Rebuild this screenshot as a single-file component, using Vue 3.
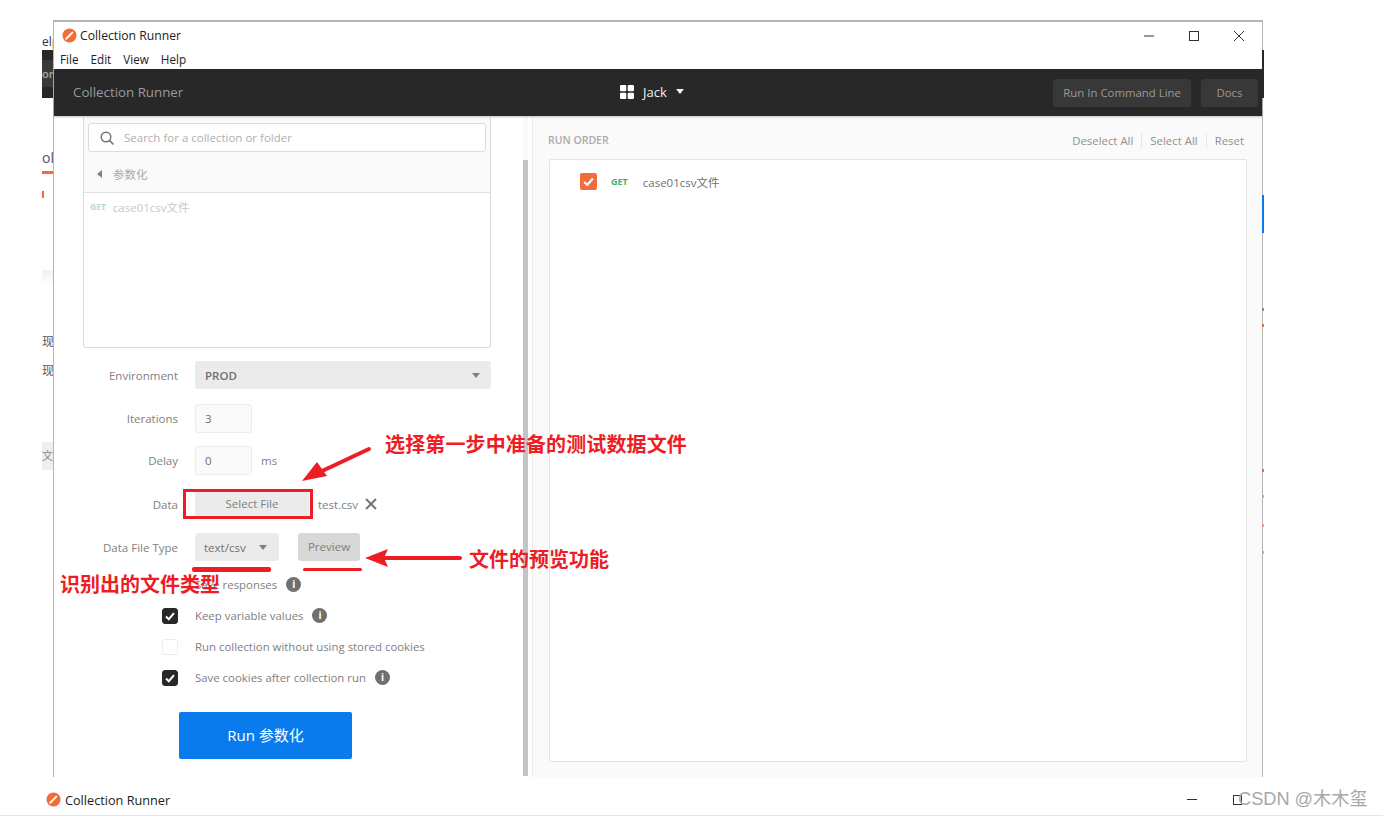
<script setup>
const options = [
  { label: "Save responses", checked: false, hidden: true, info: true },
  { label: "Keep variable values", checked: true, info: true },
  { label: "Run collection without using stored cookies", checked: false, info: false },
  { label: "Save cookies after collection run", checked: true, info: true },
];
// tiny specks of the main window on the right edge: [top, colour]
const specks = [
  [308, "#8a8a8a"],
  [324, "#e0734d"],
  [469, "#e0734d"],
  [495, "#e8a088"],
  [524, "#e8a088"],
  [551, "#e8a088"],
];
</script>

<template>
  <div class="desktop">
    <!-- bits of the main window sticking out behind the runner -->
    <div class="behind">
      <span class="bit elp">elp</span>
      <div class="bit dark"><span>or</span></div>
      <span class="bit tab">ol</span>
      <div class="bit tab-line"></div>
      <div class="bit tab-dot"></div>
      <div class="bit fade"></div>
      <span class="bit xian one">现</span>
      <span class="bit xian two">现</span>
      <span class="bit wen">文件</span>
    </div>
    <div class="behind-right">
      <div class="r-dark"></div>
      <div class="r-blue"></div>
      <div v-for="s in specks" :key="s[0]" class="speck" :style="{ top: s[0] - 50 + 'px', background: s[1] }"></div>
    </div>

    <div class="window">
      <div class="titlebar">
        <svg class="logo" viewBox="0 0 16 16">
          <circle cx="8" cy="8" r="7.5" fill="#f26b3a" />
          <path d="M4.5 11.5 L11 5" stroke="#fff" stroke-width="2" stroke-linecap="round" />
        </svg>
        <span class="title">Collection Runner</span>
        <div class="win-btns">
          <svg viewBox="0 0 12 12" width="12" height="12"><path d="M1 6h10" stroke="#333" stroke-width="1" /></svg>
          <svg viewBox="0 0 12 12" width="12" height="12"><rect x="1.5" y="1.5" width="9" height="9" fill="none" stroke="#333" stroke-width="1" /></svg>
          <svg viewBox="0 0 12 12" width="12" height="12"><path d="M1 1l10 10M11 1L1 11" stroke="#333" stroke-width="1" /></svg>
        </div>
      </div>
      <div class="menubar">
        <span>File</span><span>Edit</span><span>View</span><span>Help</span>
      </div>

      <header class="header">
        <span class="header-title">Collection Runner</span>
        <div class="workspace">
          <svg viewBox="0 0 14 14" width="14" height="14">
            <rect x="0" y="0" width="6.3" height="6.3" rx="1" fill="#fff" />
            <rect x="7.7" y="0" width="6.3" height="6.3" rx="1" fill="#fff" />
            <rect x="0" y="7.7" width="6.3" height="6.3" rx="1" fill="#fff" />
            <rect x="7.7" y="7.7" width="6.3" height="6.3" rx="1" fill="#fff" />
          </svg>
          <span>Jack</span>
          <i class="caret white"></i>
        </div>
        <div class="header-btns">
          <span class="hbtn">Run In Command Line</span>
          <span class="hbtn docs">Docs</span>
        </div>
      </header>

      <div class="body">
        <section class="left">
          <div class="tree">
            <div class="tree-top">
              <div class="search">
                <svg viewBox="0 0 14 14" width="14" height="14">
                  <circle cx="6" cy="6" r="4.8" fill="none" stroke="#707070" stroke-width="1.4" />
                  <path d="M9.5 9.5L13 13" stroke="#707070" stroke-width="1.6" stroke-linecap="round" />
                </svg>
                <span>Search for a collection or folder</span>
              </div>
              <div class="crumb"><i class="back"></i><span>参数化</span></div>
            </div>
            <div class="tree-row"><b>GET</b><span>case01csv文件</span></div>
          </div>

          <div class="row env">
            <label>Environment</label>
            <div class="select wide"><strong>PROD</strong><i class="caret"></i></div>
          </div>
          <div class="row iter">
            <label>Iterations</label>
            <div class="num">3</div>
          </div>
          <div class="row delay">
            <label>Delay</label>
            <div class="num">0</div>
            <span class="unit">ms</span>
          </div>
          <div class="row data">
            <label>Data</label>
            <div class="file-btn">Select File</div>
            <span class="file-name">test.csv</span>
            <svg class="file-x" viewBox="0 0 12 12" width="12" height="12"><path d="M1 1l10 10M11 1L1 11" stroke="#707070" stroke-width="1.8" /></svg>
          </div>
          <div class="row type">
            <label>Data File Type</label>
            <div class="select small"><span>text/csv</span><i class="caret"></i></div>
            <div class="preview">Preview</div>
          </div>

          <div class="options">
            <div v-for="o in options" :key="o.label" class="option">
              <span class="box" :class="{ on: o.checked, hide: o.hidden }">
                <svg v-if="o.checked" viewBox="0 0 12 12" width="12" height="12"><path d="M2 6.5l2.8 2.7L10 3.2" fill="none" stroke="#fff" stroke-width="2" /></svg>
              </span>
              <span class="opt-text">{{ o.label }}</span>
              <span v-if="o.info" class="info">i</span>
            </div>
          </div>

          <div class="run-wrap"><div class="run">Run 参数化</div></div>
        </section>

        <div class="track"><div class="thumb"></div></div>

        <section class="right">
          <div class="order-head">
            <span class="order-title">RUN ORDER</span>
            <div class="order-links">
              <span>Deselect All</span><span>Select All</span><span>Reset</span>
            </div>
          </div>
          <div class="order-box">
            <div class="order-row">
              <span class="orange">
                <svg viewBox="0 0 12 12" width="13" height="13"><path d="M2 6.5l2.8 2.7L10 3.2" fill="none" stroke="#fff" stroke-width="2" /></svg>
              </span>
              <b>GET</b>
              <span>case01csv文件</span>
            </div>
          </div>
        </section>
      </div>
    </div>

    <footer class="taskbar">
      <svg class="logo" viewBox="0 0 16 16">
        <circle cx="8" cy="8" r="7.5" fill="#f26b3a" />
        <path d="M4.5 11.5 L11 5" stroke="#fff" stroke-width="2" stroke-linecap="round" />
      </svg>
      <span class="title big">Collection Runner</span>
      <div class="task-min"></div>
      <div class="task-max"></div>
      <span class="mark">CSDN @木木玺</span>
    </footer>

    <!-- red notes drawn over the shot -->
    <div class="note-frame"></div>
    <div class="note-line l1"></div>
    <div class="note-line l2"></div>
    <svg class="arrows" viewBox="0 0 1383 818" width="1383" height="818">
      <path d="M369 449L320 472" stroke="#ee1c25" stroke-width="4" stroke-linecap="round" />
      <path d="M302 481L317 462L327 476Z" fill="#ee1c25" />
      <path d="M460 558H380" stroke="#ee1c25" stroke-width="4" stroke-linecap="round" />
      <path d="M365 558L388 549L384 558L388 567Z" fill="#ee1c25" />
    </svg>
    <span class="note n1">选择第一步中准备的测试数据文件</span>
    <span class="note n2">文件的预览功能</span>
    <span class="note n3">识别出的文件类型</span>
  </div>
</template>

<style scoped>
.desktop {
  position: relative;
  width: 1383px;
  height: 818px;
  overflow: hidden;
  background: #fff;
  font-family: "Open Sans", "Noto Sans CJK SC", sans-serif;
  font-size: 11.5px;
  color: #808080;
}

.behind {
  position: absolute;
  left: 42px;
  top: 30px;
  width: 12px;
  height: 747px;
  overflow: hidden;
  background: #fff;
}
.bit {
  position: absolute;
  white-space: nowrap;
}
.elp {
  left: 0;
  top: 3px;
  font-size: 12px;
  color: #333;
}
.dark {
  left: 0;
  top: 20px;
  width: 12px;
  height: 48px;
  background: #282828;
}
.dark span {
  position: absolute;
  left: 0;
  top: 10px;
  padding: 6px 0;
  width: 12px;
  background: #3a3a3a;
  color: #aaa;
  font-weight: 600;
  font-size: 11px;
}
.tab {
  left: 0;
  top: 118px;
  font-size: 14px;
  color: #555;
}
.tab-line {
  left: 0;
  top: 141px;
  width: 12px;
  height: 3px;
  background: #f26b3a;
}
.tab-dot {
  left: 0;
  top: 161px;
  width: 2px;
  height: 7px;
  background: #f26b3a;
}
.fade {
  left: 0;
  top: 240px;
  width: 12px;
  height: 14px;
  background: linear-gradient(#f0f0f0, #fff);
}
.xian {
  left: 0;
  font-size: 12px;
  color: #555;
}
.one { top: 302px; }
.two { top: 331px; }
.wen {
  left: 0;
  top: 412px;
  width: 12px;
  height: 28px;
  line-height: 28px;
  overflow: hidden;
  background: #eee;
  color: #888;
  font-size: 11px;
}

.behind-right {
  position: absolute;
  left: 1262px;
  top: 50px;
  width: 2px;
  z-index: 2;
}
.r-dark {
  height: 48px;
  background: #282828;
}
.r-blue {
  margin-top: 97px;
  height: 38px;
  background: #097bed;
}
.speck {
  position: absolute;
  left: 0;
  width: 2px;
  height: 3px;
}

.window {
  position: absolute;
  left: 53px;
  top: 20px;
  width: 1210px;
  height: 758px;
  box-sizing: border-box;
  border: 1px solid #b5b5b5;
  border-width: 2px 1px 1px 1px;
  background: #fff;
  display: flex;
  flex-direction: column;
}
.titlebar {
  height: 27px;
  display: flex;
  align-items: center;
  padding-left: 8px;
  flex: none;
}
.logo {
  width: 15px;
  height: 15px;
  flex: none;
}
.title {
  margin-left: 3px;
  font-size: 12.2px;
  color: #222;
}
.title.big {
  margin-left: 4px;
  font-size: 12.7px;
}
.win-btns {
  margin-left: auto;
  margin-right: 17px;
  display: flex;
  gap: 33px;
}
.menubar {
  height: 20px;
  display: flex;
  gap: 12px;
  align-items: center;
  padding-left: 6px;
  box-sizing: border-box;
  flex: none;
  font-size: 11.7px;
  color: #222;
}

.header {
  height: 47px;
  flex: none;
  background: #282828;
  display: flex;
  align-items: center;
  position: relative;
  padding-left: 19px;
  box-shadow: 0 1px 2px rgba(0, 0, 0, 0.25);
  z-index: 1;
}
.header-title {
  font-size: 13.3px;
  color: #9a9a9a;
  margin-top: -1px;
}
.workspace {
  position: absolute;
  left: 566px;
  top: -1px;
  height: 47px;
  display: flex;
  align-items: center;
  gap: 9px;
  color: #f0f0f0;
  font-size: 13px;
}
.header-btns {
  margin-left: auto;
  margin-right: 4px;
  display: flex;
  gap: 10px;
}
.hbtn {
  height: 28px;
  line-height: 28px;
  padding: 0 10px;
  background: #383838;
  border-radius: 3px;
  color: #9a9a9a;
  font-size: 11.4px;
}
.docs {
  padding: 0 15.5px;
}

.caret {
  width: 0;
  height: 0;
  border-left: 4px solid transparent;
  border-right: 4px solid transparent;
  border-top: 5px solid #808080;
}
.caret.white {
  border-top-color: #f0f0f0;
}

.body {
  flex: 1;
  display: flex;
  min-height: 0;
  margin-top: 1px;
}
.left {
  width: 469px;
  flex: none;
  padding-left: 29px;
  box-sizing: border-box;
}
.tree {
  width: 408px;
  height: 231px;
  box-sizing: border-box;
  border: 1px solid #dcdcdc;
  border-top: 0;
  border-radius: 0 0 3px 3px;
}
.tree-top {
  height: 76px;
  background: #fafafa;
  border-bottom: 1px solid #e2e2e2;
  padding: 6px 4px 0;
  box-sizing: border-box;
}
.search {
  height: 29px;
  background: #fff;
  border: 1px solid #dcdcdc;
  border-radius: 3px;
  box-sizing: border-box;
  display: flex;
  align-items: center;
  gap: 10px;
  padding-left: 11px;
  color: #b0b0b0;
  font-size: 11.5px;
}
.crumb {
  display: flex;
  align-items: center;
  gap: 11px;
  margin-top: 14px;
  padding-left: 9px;
  color: #aaa;
  font-size: 11.5px;
}
.back {
  width: 0;
  height: 0;
  border-top: 4px solid transparent;
  border-bottom: 4px solid transparent;
  border-right: 5px solid #808080;
}
.tree-row {
  display: flex;
  align-items: center;
  gap: 7px;
  height: 27px;
  padding-left: 6px;
  color: #c8c8c8;
  font-size: 11.5px;
}
.tree-row b {
  font-size: 8.5px;
  color: #b5dcc3;
}

.row {
  display: flex;
  align-items: center;
}
.row label {
  width: 95px;
  margin-right: 17px;
  flex: none;
  text-align: right;
  color: #808080;
}
.env {
  margin-top: 13px;
  height: 28px;
}
.iter {
  margin-top: 15px;
  height: 29px;
}
.delay {
  margin-top: 13px;
  height: 29px;
}
.data {
  margin-top: 16px;
  height: 26px;
}
.type {
  margin-top: 16px;
  height: 28px;
}
.select {
  height: 28px;
  background: #ebebeb;
  border-radius: 3px;
  display: flex;
  align-items: center;
  justify-content: space-between;
  box-sizing: border-box;
  color: #707070;
}
.wide {
  width: 296px;
  padding: 0 11px 0 10px;
}
.wide strong {
  font-weight: 600;
}
.small {
  width: 84px;
  padding: 0 12px 0 9px;
}
.num {
  width: 57px;
  height: 100%;
  box-sizing: border-box;
  border: 1px solid #ececec;
  background: #fafafa;
  border-radius: 3px;
  padding-left: 9px;
  display: flex;
  align-items: center;
  color: #707070;
}
.unit {
  margin-left: 9px;
}
.file-btn {
  width: 114px;
  height: 26px;
  line-height: 26px;
  background: #ebebeb;
  text-align: center;
  color: #808080;
}
.file-name {
  margin-left: 9px;
}
.file-x {
  margin-left: 7px;
}
.preview {
  margin-left: 19px;
  width: 62px;
  height: 28px;
  line-height: 28px;
  text-align: center;
  background: #d8d8d8;
  border-radius: 3px;
  color: #808080;
}

.options {
  margin-top: 8px;
  padding-left: 79px;
}
.option {
  height: 31px;
  display: flex;
  align-items: center;
  font-size: 11.4px;
}
.box {
  width: 16px;
  height: 16px;
  flex: none;
  box-sizing: border-box;
  border: 1px solid #ececec;
  border-radius: 3px;
  margin-right: 17px;
  display: flex;
  align-items: center;
  justify-content: center;
}
.box.on {
  background: #282828;
  border-color: #282828;
}
.box.hide {
  visibility: hidden;
}
.info {
  width: 15px;
  height: 15px;
  margin-left: 9px;
  border-radius: 50%;
  background: #707070;
  color: #fff;
  font-size: 10px;
  font-weight: 700;
  line-height: 15px;
  text-align: center;
}
.run-wrap {
  margin-top: 19px;
  padding-left: 96px;
}
.run {
  width: 173px;
  height: 47px;
  line-height: 46px;
  text-align: center;
  background: #097bed;
  border-radius: 2px;
  color: #fff;
  font-size: 15px;
}

.track {
  width: 5px;
  flex: none;
  background: #fafafa;
}
.thumb {
  margin-top: 43px;
  height: 616px;
  background: #c4c4c4;
}
.right {
  margin-left: 4px;
  flex: 1;
  background: #fafafa;
  border-left: 1px solid #ececec;
  padding: 0 15px 15px 15px;
  box-sizing: border-box;
  display: flex;
  flex-direction: column;
}
.order-head {
  height: 42px;
  display: flex;
  align-items: center;
  justify-content: space-between;
  padding-top: 4px;
  box-sizing: border-box;
  flex: none;
}
.order-title {
  font-size: 10.5px;
  font-weight: 600;
  color: #aaa;
  margin-top: -1px;
}
.order-links {
  display: flex;
  margin-right: 3px;
  color: #909090;
  font-size: 11.4px;
}
.order-links span {
  padding: 0 8px;
  border-left: 1px solid #e6e6e6;
  line-height: 15px;
}
.order-links span:first-child {
  border-left: 0;
}
.order-links span:last-child {
  padding-right: 0;
}
.order-box {
  flex: 1;
  margin-left: 1px;
  background: #fff;
  border: 1px solid #e4e4e4;
  border-radius: 2px;
}
.order-row {
  display: flex;
  align-items: center;
  height: 17px;
  margin-top: 13px;
  padding-left: 30px;
  font-size: 11.5px;
  color: #707070;
}
.orange {
  width: 17px;
  height: 17px;
  background: #f26b3a;
  border-radius: 2px;
  display: flex;
  align-items: center;
  justify-content: center;
  margin-right: 14px;
}
.order-row b {
  font-size: 9px;
  font-weight: 700;
  color: #3fb36d;
  margin-right: 15px;
}

.taskbar {
  position: absolute;
  left: 0;
  top: 777px;
  width: 100%;
  height: 39px;
  padding-top: 7px;
  background: #fff;
  border-bottom: 1px solid #e4e4ec;
  box-sizing: border-box;
  display: flex;
  align-items: center;
  padding-left: 46px;
}
.task-min {
  position: absolute;
  left: 1187px;
  top: 22px;
  width: 10px;
  height: 1px;
  background: #333;
}
.task-max {
  position: absolute;
  left: 1233px;
  top: 18px;
  width: 9px;
  height: 10px;
  border: 1px solid #333;
  box-sizing: border-box;
}
.mark {
  position: absolute;
  left: 1238px;
  top: 10px;
  font-family: "Liberation Sans", "Noto Sans CJK SC", sans-serif;
  font-size: 18.2px;
  line-height: 24px;
  color: #a8a8a8;
  white-space: nowrap;
}

.note-frame {
  position: absolute;
  left: 183px;
  top: 489px;
  width: 130px;
  height: 30px;
  box-sizing: border-box;
  border: 3px solid #ee1c25;
}
.note-line {
  position: absolute;
  background: #ee1c25;
  border-radius: 2px;
}
.l1 {
  left: 192px;
  top: 567px;
  width: 79px;
  height: 5px;
}
.l2 {
  left: 303px;
  top: 568px;
  width: 59px;
  height: 3px;
}
.arrows {
  position: absolute;
  left: 0;
  top: 0;
  pointer-events: none;
}
.note {
  position: absolute;
  font-family: "Noto Sans CJK SC", sans-serif;
  font-size: 20px;
  font-weight: 700;
  line-height: 26px;
  color: #ee1c25;
  white-space: nowrap;
}
.n1 { left: 385px; top: 431px; letter-spacing: 0.13px; }
.n2 { left: 469px; top: 546px; }
.n3 { left: 60px; top: 571px; }
</style>
